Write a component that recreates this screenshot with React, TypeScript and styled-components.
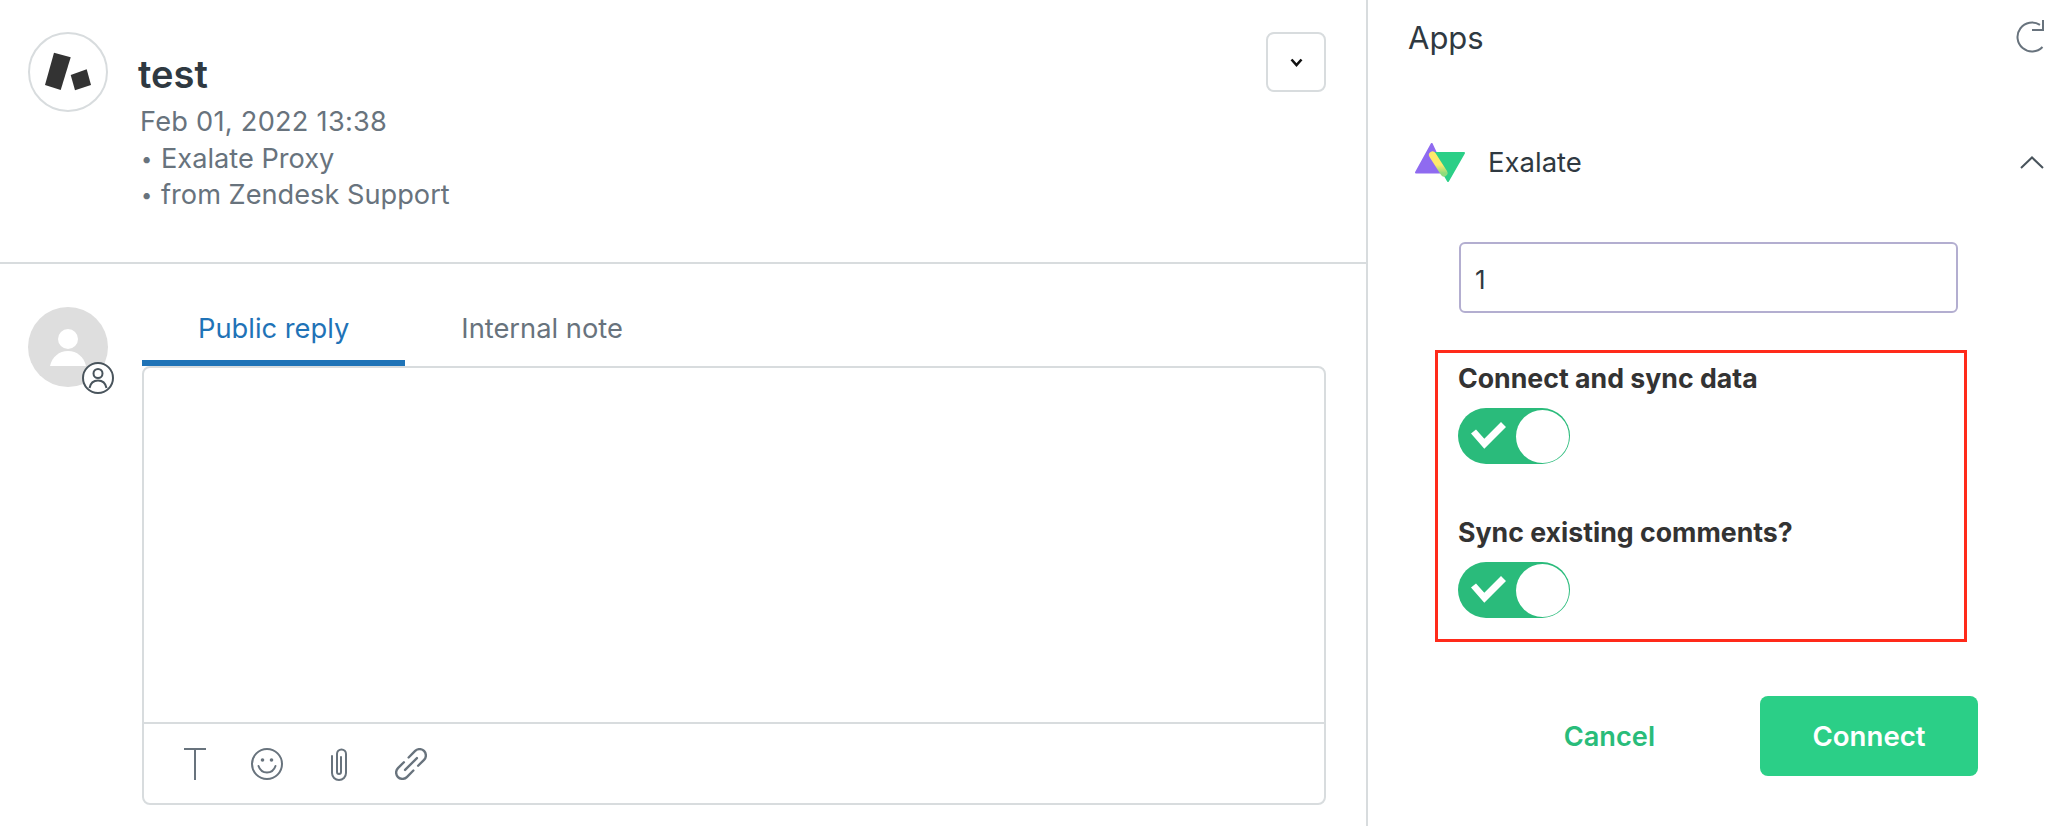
import styled, { createGlobalStyle } from "styled-components";

const GlobalStyle = createGlobalStyle`
  html, body {
    margin: 0;
    padding: 0;
    background: #fff;
  }
  body {
    width: 2070px;
    height: 826px;
    overflow: hidden;
    font-family: Inter, "Noto Sans", sans-serif;
  }
  * {
    box-sizing: border-box;
  }
`
const Page = styled.div`
  width: 2070px;
  height: 826px;
  display: flex;
  background: #fff;
`
const TicketPanel = styled.section`
  width: 1368px;
  height: 100%;
  border-right: 2px solid #d8dcde;
  display: flex;
  flex-direction: column;
`
const MessageHeader = styled.header`
  height: 264px;
  flex-shrink: 0;
  border-bottom: 2px solid #d8dcde;
  padding: 32px 40px 0 28px;
  display: flex;
`
const LogoCircle = styled.div`
  width: 80px;
  height: 80px;
  border: 2px solid #d8dcde;
  border-radius: 50%;
  flex-shrink: 0;
  & svg {
    display: block;
  }
`
const MessageInfo = styled.div`
  flex: 1;
  margin: 20px 0 0 32px;
`
const Sender = styled.h1`
  margin: 0 0 8px -2px;
  font-size: 38px;
  line-height: 44px;
  font-weight: 600;
  color: #2f3941;
`
const MetaLine = styled.div<{ $tracking?: number }>`
  display: flex;
  font-size: 27.2px;
  line-height: 36.5px;
  letter-spacing: ${props => props.$tracking ?? 0}px;
  color: #68737d;
`
const Bullet = styled.span`
  width: 21px;
  font-size: 20px;
  padding-left: 1px;
`
const MenuButton = styled.button`
  width: 60px;
  height: 60px;
  flex-shrink: 0;
  padding: 0;
  background: #fff;
  border: 2px solid #d8dcde;
  border-radius: 8px;
  display: flex;
  align-items: center;
  justify-content: center;
`
const Composer = styled.div`
  flex: 1;
  padding: 28px 40px 21px 28px;
  display: flex;
  gap: 34px;
`
const UserAvatar = styled.div`
  width: 80px;
  height: 80px;
  margin-top: 15px;
  flex-shrink: 0;
  border-radius: 50%;
  background: #dedede;
  position: relative;
  & > svg {
    display: block;
  }
`
const ChannelBadge = styled.div`
  position: absolute;
  left: 54px;
  top: 55px;
  width: 32px;
  height: 32px;
  & svg {
    display: block;
  }
`
const ComposerBody = styled.div`
  flex: 1;
  display: flex;
  flex-direction: column;
`
const Tabs = styled.div`
  display: flex;
  height: 74px;
  flex-shrink: 0;
`
const Tab = styled.div<{ $active?: boolean }>`
  padding: 4px 56px 0;
  height: 74px;
  display: flex;
  align-items: center;
  font-size: 27.3px;
  color: ${props => props.$active ? "#1f73b7" : "#68737d"};
  border-bottom: 6px solid ${props => props.$active ? "#1f73b7" : "transparent"};
`
const Editor = styled.div`
  flex: 1;
  border: 2px solid #d8dcde;
  border-radius: 8px;
  display: flex;
  flex-direction: column;
`
const EditorArea = styled.div`
  flex: 1;
`
const Toolbar = styled.div`
  height: 81px;
  border-top: 2px solid #d8dcde;
  padding-left: 15px;
  display: flex;
  align-items: center;
  color: #68737d;
`
const ToolSlot = styled.div`
  width: 72px;
  display: flex;
  justify-content: center;
  align-items: center;
`
const AppsPanel = styled.aside`
  flex: 1;
  padding: 12px 26px 0 40px;
`
const AppsHeader = styled.div`
  height: 50px;
  display: flex;
  align-items: center;
  justify-content: space-between;
`
const AppsTitle = styled.h2`
  margin: 0;
  font-size: 31px;
  font-weight: 400;
  color: #2f3941;
`
const AppRow = styled.div`
  margin-top: 80px;
  height: 40px;
  padding-left: 6px;
  display: flex;
  align-items: center;
  justify-content: space-between;
`
const AppName = styled.div`
  display: flex;
  align-items: center;
  gap: 22px;
  font-size: 27.5px;
  color: #2f3941;
`
const AppForm = styled.form`
  margin: 60px 0 0 27px;
  width: 543px;
`
const TextInput = styled.input`
  display: block;
  width: 499px;
  height: 71px;
  margin-left: 24px;
  padding: 4px 14px 0;
  border: 2px solid #b3aed0;
  border-radius: 6px;
  outline: none;
  font-family: inherit;
  font-size: 26px;
  color: #2f3941;
`
const Highlight = styled.div`
  margin-top: 37px;
  width: 532px;
  height: 292px;
  border: 3px solid #ff2a1a;
  padding: 9px 0 0 20px;
`
const FieldLabel = styled.div`
  font-size: 26.7px;
  line-height: 32px;
  font-weight: 700;
  color: #333;
`
const Toggle = styled.div`
  width: 112px;
  height: 56px;
  margin: 14px 0 52px;
  padding: 0 1.5px 0 13px;
  border-radius: 28px;
  background: #2abb7b;
  display: flex;
  align-items: center;
  justify-content: space-between;
  & svg {
    margin-top: -2px;
  }
`
const Knob = styled.span`
  width: 53px;
  height: 53px;
  border-radius: 50%;
  background: #fff;
`
const FormFooter = styled.div`
  margin-top: 54px;
  display: flex;
  justify-content: flex-end;
  align-items: center;
  gap: 105px;
`
const CancelButton = styled.button`
  padding: 0;
  border: none;
  background: none;
  font-family: inherit;
  font-size: 27.2px;
  font-weight: 600;
  color: #29bc7a;
`
const ConnectButton = styled.button`
  width: 218px;
  height: 80px;
  padding: 0;
  border: none;
  border-radius: 8px;
  background: #2bcf87;
  font-family: inherit;
  font-size: 27.6px;
  font-weight: 600;
  color: #fff;
`

function ToggleSwitch() {
  return (
    <Toggle>
      <svg width="35" height="27" viewBox="0 0 35 27">
        <polygon points="0,11.5 13.3,26.7 35,5 30,0 13.3,16.7 5,7.5" fill="#fff" />
      </svg>
      <Knob />
    </Toggle>
  )
}

function App() {
  return (
    <>
      <GlobalStyle />
      <Page>
        <TicketPanel>
          <MessageHeader>
            <LogoCircle>
              <svg width="76" height="76" viewBox="2 2 76 76">
                <polygon points="26,20.7 42.7,25.3 32.7,58 17,53" fill="#333" />
                <polygon points="42.7,43 58.7,37.3 63,53 47,58.3" fill="#333" />
              </svg>
            </LogoCircle>
            <MessageInfo>
              <Sender>test</Sender>
              <MetaLine $tracking={0.25}>Feb 01, 2022 13:38</MetaLine>
              <MetaLine><Bullet>•</Bullet>Exalate Proxy</MetaLine>
              <MetaLine><Bullet>•</Bullet>from Zendesk Support</MetaLine>
            </MessageInfo>
            <MenuButton aria-label="More">
              <svg width="13" height="9" viewBox="0 0 13 9" fill="none">
                <path d="M1.5 1.5 6.5 7 11.5 1.5" stroke="#111" strokeWidth="2.6" />
              </svg>
            </MenuButton>
          </MessageHeader>
          <Composer>
            <UserAvatar>
              <svg width="80" height="80" viewBox="0 0 80 80">
                <circle cx="40" cy="32" r="10" fill="#fff" />
                <path d="M22 59c2-9 9-15 18-15s16 6 18 15z" fill="#fff" />
              </svg>
              <ChannelBadge>
                <svg width="32" height="32" viewBox="0 0 32 32" fill="none">
                  <circle cx="16" cy="16" r="15" fill="#fff" stroke="#49545c" strokeWidth="2" />
                  <circle cx="16" cy="11.5" r="4.5" stroke="#49545c" strokeWidth="2" />
                  <path d="M7.5 26c1-5 4.5-7.500 8.500-7.500s7.500 2.500 8.500 7.500" stroke="#49545c" strokeWidth="2" />
                </svg>
              </ChannelBadge>
            </UserAvatar>
            <ComposerBody>
              <Tabs>
                <Tab $active>Public reply</Tab>
                <Tab>Internal note</Tab>
              </Tabs>
              <Editor>
                <EditorArea />
                <Toolbar>
                  <ToolSlot>
                    <svg width="22" height="32" viewBox="0 0 22 32" fill="none">
                      <path d="M0 1h22M11 1v31" stroke="currentColor" strokeWidth="2" />
                    </svg>
                  </ToolSlot>
                  <ToolSlot>
                    <svg width="32" height="32" viewBox="0 0 32 32" fill="none">
                      <circle cx="16" cy="16" r="15" stroke="currentColor" strokeWidth="2" />
                      <circle cx="11.5" cy="12" r="1.8" fill="currentColor" />
                      <circle cx="20.5" cy="12" r="1.8" fill="currentColor" />
                      <path d="M7.5 18c1.5 4.500 5 6.500 8.500 6.500s7-2 8.500-6.500" stroke="currentColor" strokeWidth="2" strokeLinecap="round" />
                    </svg>
                  </ToolSlot>
                  <ToolSlot>
                    <svg width="18" height="34" viewBox="0 0 18 34" fill="none">
                      <path d="M2 9v17a7 7 0 0 0 14 0V7a4.500 4.500 0 0 0-9 0v18a2 2 0 0 0 4 0V10" stroke="currentColor" strokeWidth="2" strokeLinecap="round" />
                    </svg>
                  </ToolSlot>
                  <ToolSlot>
                    <svg width="32" height="32" viewBox="2.5 2.5 27 27" fill="none">
                      <path d="M14 10.500 19.500 5a5.300 5.300 0 0 1 7.500 7.500L22 17.500" stroke="currentColor" strokeWidth="2" strokeLinecap="round" />
                      <path d="M18 21.500 12.500 27A5.300 5.300 0 0 1 5 19.500L10 14.500" stroke="currentColor" strokeWidth="2" strokeLinecap="round" />
                      <path d="M11 21 21 11" stroke="currentColor" strokeWidth="2" strokeLinecap="round" />
                    </svg>
                  </ToolSlot>
                </Toolbar>
              </Editor>
            </ComposerBody>
          </Composer>
        </TicketPanel>
        <AppsPanel>
          <AppsHeader>
            <AppsTitle>Apps</AppsTitle>
            <svg width="30" height="36" viewBox="0 0 30 36" fill="none">
              <path d="M26 5.900A14.500 14.500 0 1 0 28.500 28" stroke="#68737d" strokeWidth="2" />
              <path d="M29 1v10H18" stroke="#68737d" strokeWidth="2" />
            </svg>
          </AppsHeader>
          <AppRow>
            <AppName>
              <svg width="52" height="39" viewBox="0 0 52 39" fill="none">
                <defs>
                  <linearGradient id="bar" x1="0" y1="0" x2="0" y2="1">
                    <stop offset="0.55" stopColor="#ffe96b" />
                    <stop offset="1" stopColor="#8fdc7c" />
                  </linearGradient>
                </defs>
                <path d="M17.700 1 31 29.500H2z" fill="#8f6bf0" stroke="#8f6bf0" strokeWidth="2" strokeLinejoin="round" />
                <path d="M18 10h32L34 38z" fill="#2bcf87" stroke="#2bcf87" strokeWidth="2" strokeLinejoin="round" />
                <path d="M18.500 12 30 30" stroke="url(#bar)" strokeWidth="7" strokeLinecap="round" />
              </svg>
              Exalate
            </AppName>
            <svg width="24" height="13" viewBox="0 0 24 13" fill="none">
              <path d="M1 12 12 1.500 23 12" stroke="#49545c" strokeWidth="2" />
            </svg>
          </AppRow>
          <AppForm>
            <TextInput defaultValue="1" />
            <Highlight>
              <FieldLabel>Connect and sync data</FieldLabel>
              <ToggleSwitch />
              <FieldLabel>Sync existing comments?</FieldLabel>
              <ToggleSwitch />
            </Highlight>
            <FormFooter>
              <CancelButton type="button">Cancel</CancelButton>
              <ConnectButton type="button">Connect</ConnectButton>
            </FormFooter>
          </AppForm>
        </AppsPanel>
      </Page>
    </>
  )
}
export default App;
